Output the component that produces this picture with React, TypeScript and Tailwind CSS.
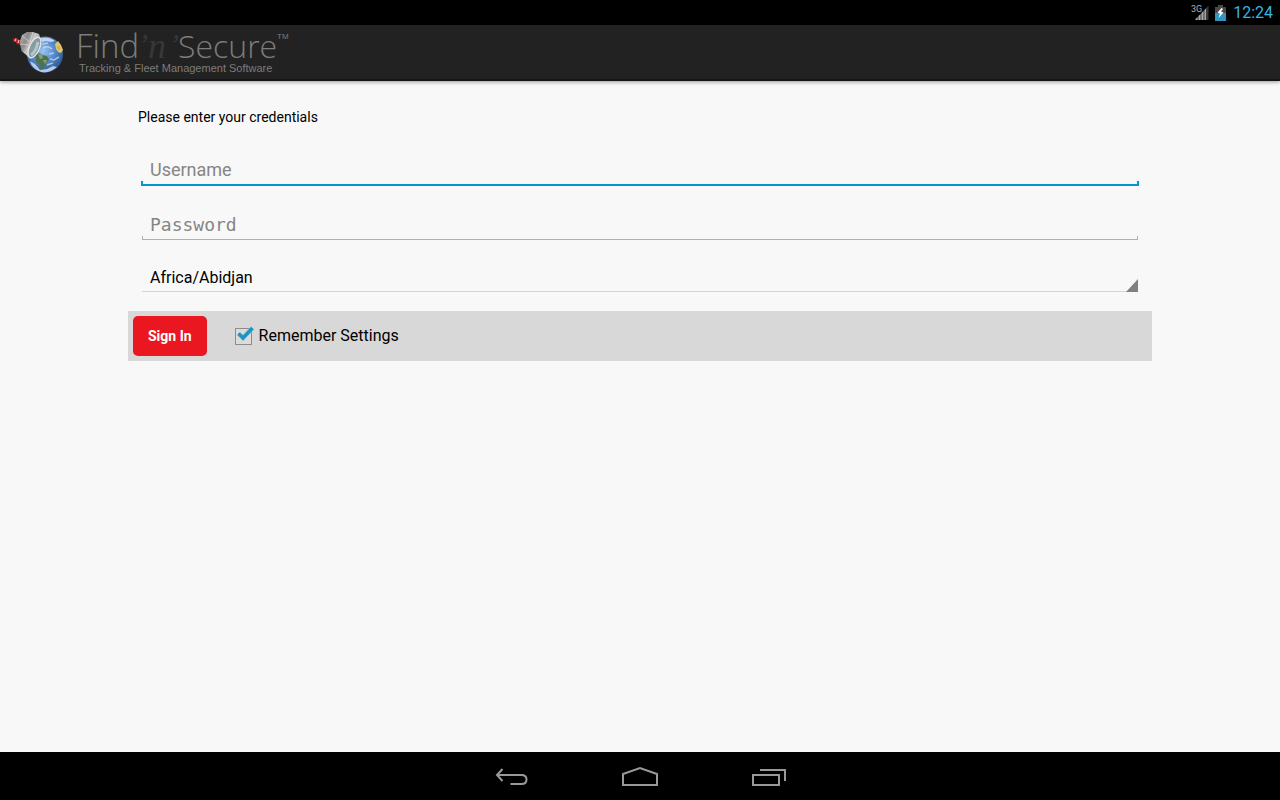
import { useState } from "react";

function StatusBar() {
  return (
    <div className="flex h-[25px] shrink-0 items-center justify-end bg-black pr-[7px]">
      <svg width="18" height="17" viewBox="0 0 18 17" className="mr-[6px]" role="img" aria-label="3G signal">
        <path d="M17.5 1.5V16H4z" fill="#3a3a3a" />
        <path d="M4.500 16v-1l2-2v3zM7.500 16v-4l2-2v6zM10.500 16V9l2-2v9zM13.500 16V6l1.500-1.500V16z" fill="#a8a8a8" />
        <text x="0" y="8" fontSize="9" fill="#b0b0b0" fontFamily="Roboto, sans-serif">3G</text>
      </svg>
      <svg width="11" height="16" viewBox="0 0 11 16" className="mr-[7px]" role="img" aria-label="Battery charging">
        <path d="M3 0h5v2h3v6H0V2h3z" fill="#4a4a4a" />
        <path d="M0 8h11v8H0z" fill="#3096be" />
        <path d="M6.500 3L2.500 7.500l2.500 1L3.500 13l5-5.500-2.500-1L8 4z" fill="#fff" />
      </svg>
      <span className="text-[16px] leading-[25px] text-[#33b5e5]">12:24</span>
    </div>
  );
}

function Logo() {
  return (
    <svg width="300" height="55" viewBox="0 25 300 55" className="overflow-visible" role="img" aria-label="Find 'n' Secure">
      <defs>
        <radialGradient id="sea" cx="0.45" cy="0.4" r="0.62">
          <stop offset="0" stopColor="#9cc4f0" />
          <stop offset="0.55" stopColor="#5487c8" />
          <stop offset="1" stopColor="#2b528f" />
        </radialGradient>
        <linearGradient id="dish" x1="0" y1="0" x2="1" y2="0.6">
          <stop offset="0" stopColor="#b8b8b8" />
          <stop offset="0.35" stopColor="#8a8a8a" />
          <stop offset="0.6" stopColor="#c9c9c9" />
          <stop offset="1" stopColor="#8f8f8f" />
        </linearGradient>
      </defs>
      <circle cx="45" cy="54.500" r="18" fill="url(#sea)" />
      <path d="M41 38q8-2 14 3l-4 1-5-1-4 1z" fill="#dce9f8" opacity=".8" />
      <path d="M35 55l4-2 3 2 5 1 2 4-3 3-1 4-3 3-2-4-4-4z" fill="#4c7250" />
      <path d="M38 54l4 1 1 3-3 1zM43 60l4 0-2 4z" fill="#8aa372" />
      <path d="M55 44l3-3 3 4 2 5-2 3-3-1-2-3z" fill="#dcc866" />
      <path d="M57 46l3 1v3l-2-1z" fill="#ec9c4a" />
      <path d="M30 61l5 3 5 6 7-1 6-3 4 1q-8 7-16 5-9-3-11-11z" fill="#d3e3f5" opacity=".8" />
      <path d="M43 48q5-3 9 1M50 59l4 1 5-3M47 65l6-2M49 54l5-1M42 44l6-1" fill="none" stroke="#d7e8fb" strokeWidth="1.500" opacity=".65" />
      <path d="M13 39l2-1 7 3-1 4-4-1-1-2-3-1z" fill="#d61d25" />
      <path d="M16 38.500l-1 3M19 40l-1 3" stroke="#f3c9c9" strokeWidth="1" />
      <path d="M20 41l2-6 5-3 6 0 6 2 1.500 5-3 12-5 7-4-1-7-6-1-5z" fill="url(#dish)" />
      <path d="M22 36l8 6 3-10M20 44l9 1M24 53l6-8 8-9" fill="none" stroke="#ececec" strokeWidth="1" opacity=".5" />
      <ellipse cx="34.500" cy="47.500" rx="5" ry="11" transform="rotate(24 34.500 47.500)" fill="#8a9aa2" stroke="#e4e4e4" strokeWidth="1.300" />
      <path d="M31 55q5-3 7-13" fill="none" stroke="#bdd2d8" strokeWidth="3" opacity=".8" />
      <g fill="#7c7c7c">
        <text x="76" y="58" fontSize="33" fontWeight="300" fontFamily="'Open Sans', 'Noto Sans', sans-serif">Find</text>
        <text x="178" y="58" fontSize="32" fontWeight="300" fontFamily="'Open Sans', 'Noto Sans', sans-serif">Secure</text>
        <text x="277" y="39" fontSize="8" fontFamily="'Liberation Sans', sans-serif">TM</text>
        <text x="79" y="72" fontSize="11" fontFamily="'Liberation Sans', sans-serif">Tracking &amp; Fleet Management Software</text>
      </g>
      <g fill="#363839" fontStyle="italic" fontFamily="'Liberation Serif', serif">
        <text x="138" y="54" fontSize="30">’</text>
        <text x="148" y="58" fontSize="36">n</text>
        <text x="169" y="54" fontSize="30">’</text>
      </g>
    </svg>
  );
}

function NavBar() {
  return (
    <nav className="flex h-12 shrink-0 items-center justify-center gap-[92px] bg-black text-[#999]">
      <button type="button" aria-label="Back" className="flex h-12 w-9 items-center justify-center">
        <svg width="36" height="24" viewBox="0 0 36 24" fill="none" stroke="currentColor" strokeWidth="2">
          <path d="M8.500 5L3 11l5.500 6M3 11h24.500q5 0 5 4.500t-5 4.500H16.500" />
        </svg>
      </button>
      <button type="button" aria-label="Home" className="flex h-12 w-9 items-center justify-center">
        <svg width="36" height="24" viewBox="0 0 36 24" fill="none" stroke="currentColor" strokeWidth="2">
          <path d="M1 21V10l17-6 17 6v11z" />
        </svg>
      </button>
      <button type="button" aria-label="Recent apps" className="flex h-12 w-9 items-center justify-center">
        <svg width="36" height="24" viewBox="0 0 36 24" fill="none" stroke="currentColor" strokeWidth="2">
          <path d="M3 11h26v10H3zM10 6h25v11" />
        </svg>
      </button>
    </nav>
  );
}

export default function App() {
  const [remember, setRemember] = useState(true);
  return (
    <div className="flex min-h-screen flex-col bg-[#f8f8f8] font-['Roboto',sans-serif] text-black">
      <StatusBar />
      <header className="flex h-14 shrink-0 items-start border-b-2 border-[#151515] bg-[#222] shadow-[0_1px_4px_rgba(0,0,0,0.4)]">
        <Logo />
      </header>
      <main className="grow">
        <form className="mx-[10%] flex flex-col pt-[26px]" onSubmit={(e) => e.preventDefault()}>
          <p className="px-[10px] text-[14px] leading-5">Please enter your credentials</p>

          <div className="mx-[13px] mt-[29px] flex flex-col">
            <input
              aria-label="Username"
              placeholder="Username"
              className="h-[25px] bg-transparent px-[9px] pt-[2px] text-[18px] leading-6 outline-none placeholder:text-[#858585]"
            />
            <div className="h-[5px] border-x-2 border-b-2 border-[#0099cc]" />
          </div>

          <div className="mx-[14px] mt-[25px] flex flex-col">
            <input
              type="password"
              aria-label="Password"
              placeholder="Password"
              className="h-[25px] bg-transparent px-2 pt-[2px] font-['DejaVu_Sans_Mono',monospace] text-[18px] leading-6 outline-none placeholder:text-[#858585]"
            />
            <div className="h-1 border-x border-b border-[#b0b0b0]" />
          </div>

          <div className="relative mx-[14px] mt-[23px] border-b border-[#d4d4d4]">
            <select
              aria-label="Time zone"
              className="block h-7 w-full appearance-none bg-transparent px-2 pt-[2px] text-[16px] outline-none"
            >
              <option>Africa/Abidjan</option>
            </select>
            <svg width="12" height="13" viewBox="0 0 12 13" className="pointer-events-none absolute right-0 -bottom-px" aria-hidden="true">
              <path d="M12 0v13H0z" fill="#808080" />
            </svg>
          </div>

          <div className="mt-[19px] flex h-[50px] items-center bg-[#d8d8d8] px-[5px]">
            <button type="submit" className="h-10 rounded-[5px] bg-[#ea1720] px-[15px] text-[14px] font-bold text-white">
              Sign In
            </button>
            <label className="ml-[27px] flex items-center gap-1 text-[16px] leading-6">
              <span className="relative flex h-[21px] w-[21px] items-center">
                <input
                  type="checkbox"
                  checked={remember}
                  onChange={(e) => setRemember(e.target.checked)}
                  className="ml-px h-[17px] w-[17px] appearance-none border border-[#8c8c8c] bg-[#dcdcdc]"
                />
                {remember && (
                  <svg width="21" height="21" viewBox="0 0 21 21" className="pointer-events-none absolute inset-0" aria-hidden="true">
                    <path d="M4.500 7.500l4.500 4.500 9.500-10" fill="none" stroke="#8cc9df" strokeWidth="5" opacity=".6" />
                    <path d="M4.500 7.500l4.500 4.500 9.500-10" fill="none" stroke="#1c93c1" strokeWidth="3.500" />
                  </svg>
                )}
              </span>
              Remember Settings
            </label>
          </div>
        </form>
      </main>
      <NavBar />
    </div>
  );
}
